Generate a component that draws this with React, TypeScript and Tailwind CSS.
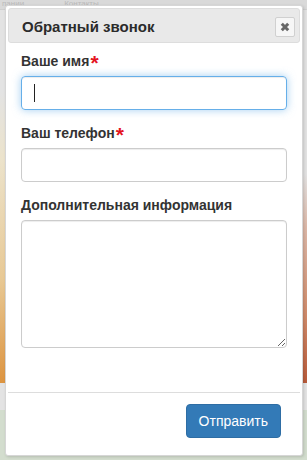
import React from 'react';

// ============================================================================
// CALLBACK DIALOG
// "Обратный звонок" modal over a faded page
// ============================================================================

function Required() {
  return <span className="relative top-[4px] ml-[1px] text-[21px] leading-[0] font-bold text-[#e4151f]">*</span>;
}

function Field({ label, required, children }: { label: string; required?: boolean; children: React.ReactNode }) {
  return (
    <div className="mb-[13px]">
      <label className="block h-[20px] mb-[5px] text-[14px] leading-[20px] font-bold text-[#333333]">
        {label}
        {required && <Required />}
      </label>
      {children}
    </div>
  );
}

export default function App() {
  return (
    <div className="relative w-[307px] h-[460px] overflow-hidden font-['Liberation_Sans',Arial,sans-serif]">
      {/* Page behind the overlay */}
      <div className="flex flex-col h-full">
        <div className="h-[10px] bg-[#d9d9d9] border-b border-[#cfcfcf] overflow-hidden">
          <div className="-mt-[1px] flex gap-[40px] pl-[2px] text-[8px] leading-[10px] text-[#b9b9b9]">
            <span>пании</span>
            <span>Контакты</span>
          </div>
        </div>
        <div className="h-[373px] flex">
          <div className="w-1/2 bg-[linear-gradient(to_bottom,#e3e3e3_0%,#e3e3e3_22%,#ece3cb_40%,#e8c995_72%,#dd9440_100%)]" />
          <div className="w-1/2 bg-[linear-gradient(to_bottom,#e2e2e2_0%,#e2e2e2_44%,#dcb8a8_58%,#cf8a6a_82%,#b85a3a_100%)]" />
        </div>
        <div className="h-[27px] bg-[#e3e3e3]" />
        <div className="flex-1 bg-[#d3ddce]" />
      </div>

      {/* Dialog */}
      <div className="absolute left-[5px] top-[5px] w-[298px] h-[451px] flex flex-col bg-white border border-[#d6d6d6] rounded-[3px] p-[2px] shadow-[1px_1px_3px_rgba(0,0,0,0.15)]">
        {/* Title bar */}
        <div className="h-[35px] shrink-0 flex items-center justify-between pl-[13px] pr-[4px] bg-[#e9e9e9] border border-[#dddddd] rounded-[3px]">
          <span className="pt-[3px] text-[15px] leading-[20px] font-bold text-[#2b2b2b]">Обратный звонок</span>
          <button className="mt-[3px] w-[20px] h-[20px] flex items-center justify-center bg-[#f6f6f6] border border-[#d0d0d0] rounded-[2px]">
            <svg width="10" height="10" viewBox="0 0 10 10">
              <path d="M1.8 1.8 L8.2 8.2 M8.2 1.8 L1.8 8.2" stroke="#666666" strokeWidth="3" strokeLinecap="butt" />
            </svg>
          </button>
        </div>

        {/* Form */}
        <div className="flex-1 px-[13px] pt-[8px]">
          <Field label="Ваше имя" required>
            <div className="relative">
              <input className="block w-full h-[34px] px-[12px] rounded-[4px] border border-[#66afe9] outline-none shadow-[inset_0_1px_1px_rgba(0,0,0,0.075),0_0_8px_rgba(102,175,233,0.6)] text-[14px]" />
              <span className="absolute left-[13px] top-[8px] w-[1px] h-[18px] bg-[#222222]" />
            </div>
          </Field>
          <Field label="Ваш телефон" required>
            <input className="block w-full h-[34px] px-[12px] rounded-[4px] border border-[#cccccc] outline-none shadow-[inset_0_1px_1px_rgba(0,0,0,0.075)] text-[14px]" />
          </Field>
          <Field label="Дополнительная информация">
            <textarea className="block w-full h-[128px] px-[12px] py-[6px] rounded-[4px] border border-[#cccccc] outline-none shadow-[inset_0_1px_1px_rgba(0,0,0,0.075)] text-[14px] resize-y" />
          </Field>
        </div>

        {/* Button pane */}
        <div className="shrink-0 flex justify-end border-t border-[#dddddd] pt-[11px] pb-[15px] pr-[19px]">
          <button className="h-[34px] px-[12px] rounded-[4px] bg-[#337ab7] border border-[#2e6da4] text-white text-[14px] leading-[20px]">
            Отправить
          </button>
        </div>
      </div>
    </div>
  );
}
